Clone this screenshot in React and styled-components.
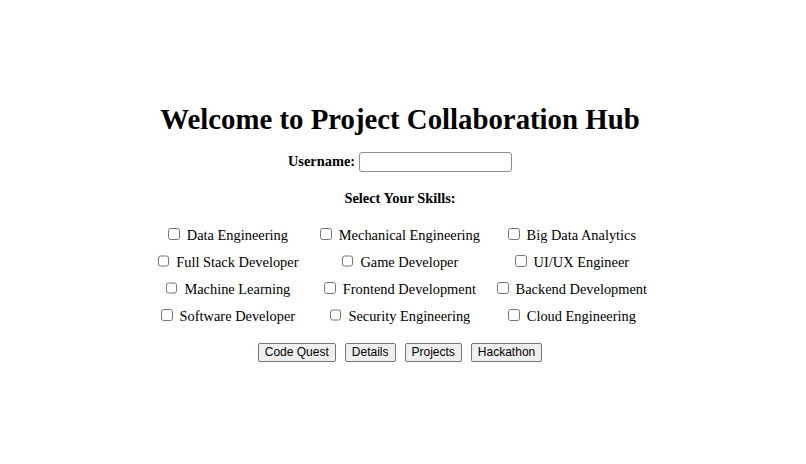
import styled, { createGlobalStyle } from 'styled-components'

const GlobalStyle = createGlobalStyle`
  html, body {
    margin: 0;
    padding: 0;
    background: #ffffff;
  }
  body {
    font-family: "Liberation Serif", "Times New Roman", serif;
    color: #000000;
  }
`

const Page = styled.div`
  min-height: 100vh;
  box-sizing: border-box;
  display: flex;
  flex-direction: column;
  align-items: center;
  justify-content: center;
  padding: 0 6px 2px 0;
`

const Title = styled.h1`
  font-size: 28.8px;
  font-weight: bold;
  margin: 0 0 14px;
  line-height: 37px;
`

const Field = styled.div`
  display: flex;
  align-items: center;
  gap: 4px;
  margin-bottom: 17px;
`

const Label = styled.label`
  font-size: 14.4px;
  font-weight: bold;
`

const TextInput = styled.input`
  width: 153px;
  height: 20px;
  box-sizing: border-box;
  border: 1px solid #8f8f8f;
  border-radius: 3px;
  padding: 1px 2px;
  font-family: "Liberation Sans", Arial, sans-serif;
  font-size: 12px;
`

const SectionTitle = styled.h3`
  font-size: 14.4px;
  font-weight: bold;
  margin: 0 0 19px;
  line-height: 18px;
`

const SkillGrid = styled.div`
  display: grid;
  grid-template-columns: repeat(3, 160px);
  column-gap: 12px;
  row-gap: 8px;
  margin-bottom: 17px;
`

const Skill = styled.label`
  display: flex;
  justify-content: center;
  align-items: center;
  font-size: 14.4px;
  white-space: nowrap;
  line-height: 19px;
`

const Box = styled.input`
  width: 11.7px;
  height: 11.7px;
  margin: 0 7px 2px 0;
  accent-color: #767676;
`

const Actions = styled.div`
  display: flex;
  gap: 9px;
`

const Button = styled.button`
  font-family: "Liberation Sans", Arial, sans-serif;
  font-size: 12px;
  color: #000000;
  background: #efefef;
  border: 1px solid #767676;
  border-radius: 2px;
  padding: 1px 6px;
  height: 19px;
  line-height: 15px;
  cursor: pointer;
`

const skills = [
  'Data Engineering',
  'Mechanical Engineering',
  'Big Data Analytics',
  'Full Stack Developer',
  'Game Developer',
  'UI/UX Engineer',
  'Machine Learning',
  'Frontend Development',
  'Backend Development',
  'Software Developer',
  'Security Engineering',
  'Cloud Engineering',
]

const actions = ['Code Quest', 'Details', 'Projects', 'Hackathon']

export default function App() {
  return (
    <>
      <GlobalStyle />
      <Page>
        <Title>Welcome to Project Collaboration Hub</Title>
        <Field>
          <Label htmlFor="username">Username:</Label>
          <TextInput id="username" type="text" />
        </Field>
        <SectionTitle>Select Your Skills:</SectionTitle>
        <SkillGrid>
          {skills.map(skill => (
            <Skill key={skill}>
              <Box type="checkbox" value={skill} />
              {skill}
            </Skill>
          ))}
        </SkillGrid>
        <Actions>
          {actions.map(a => (
            <Button key={a}>{a}</Button>
          ))}
        </Actions>
      </Page>
    </>
  )
}
